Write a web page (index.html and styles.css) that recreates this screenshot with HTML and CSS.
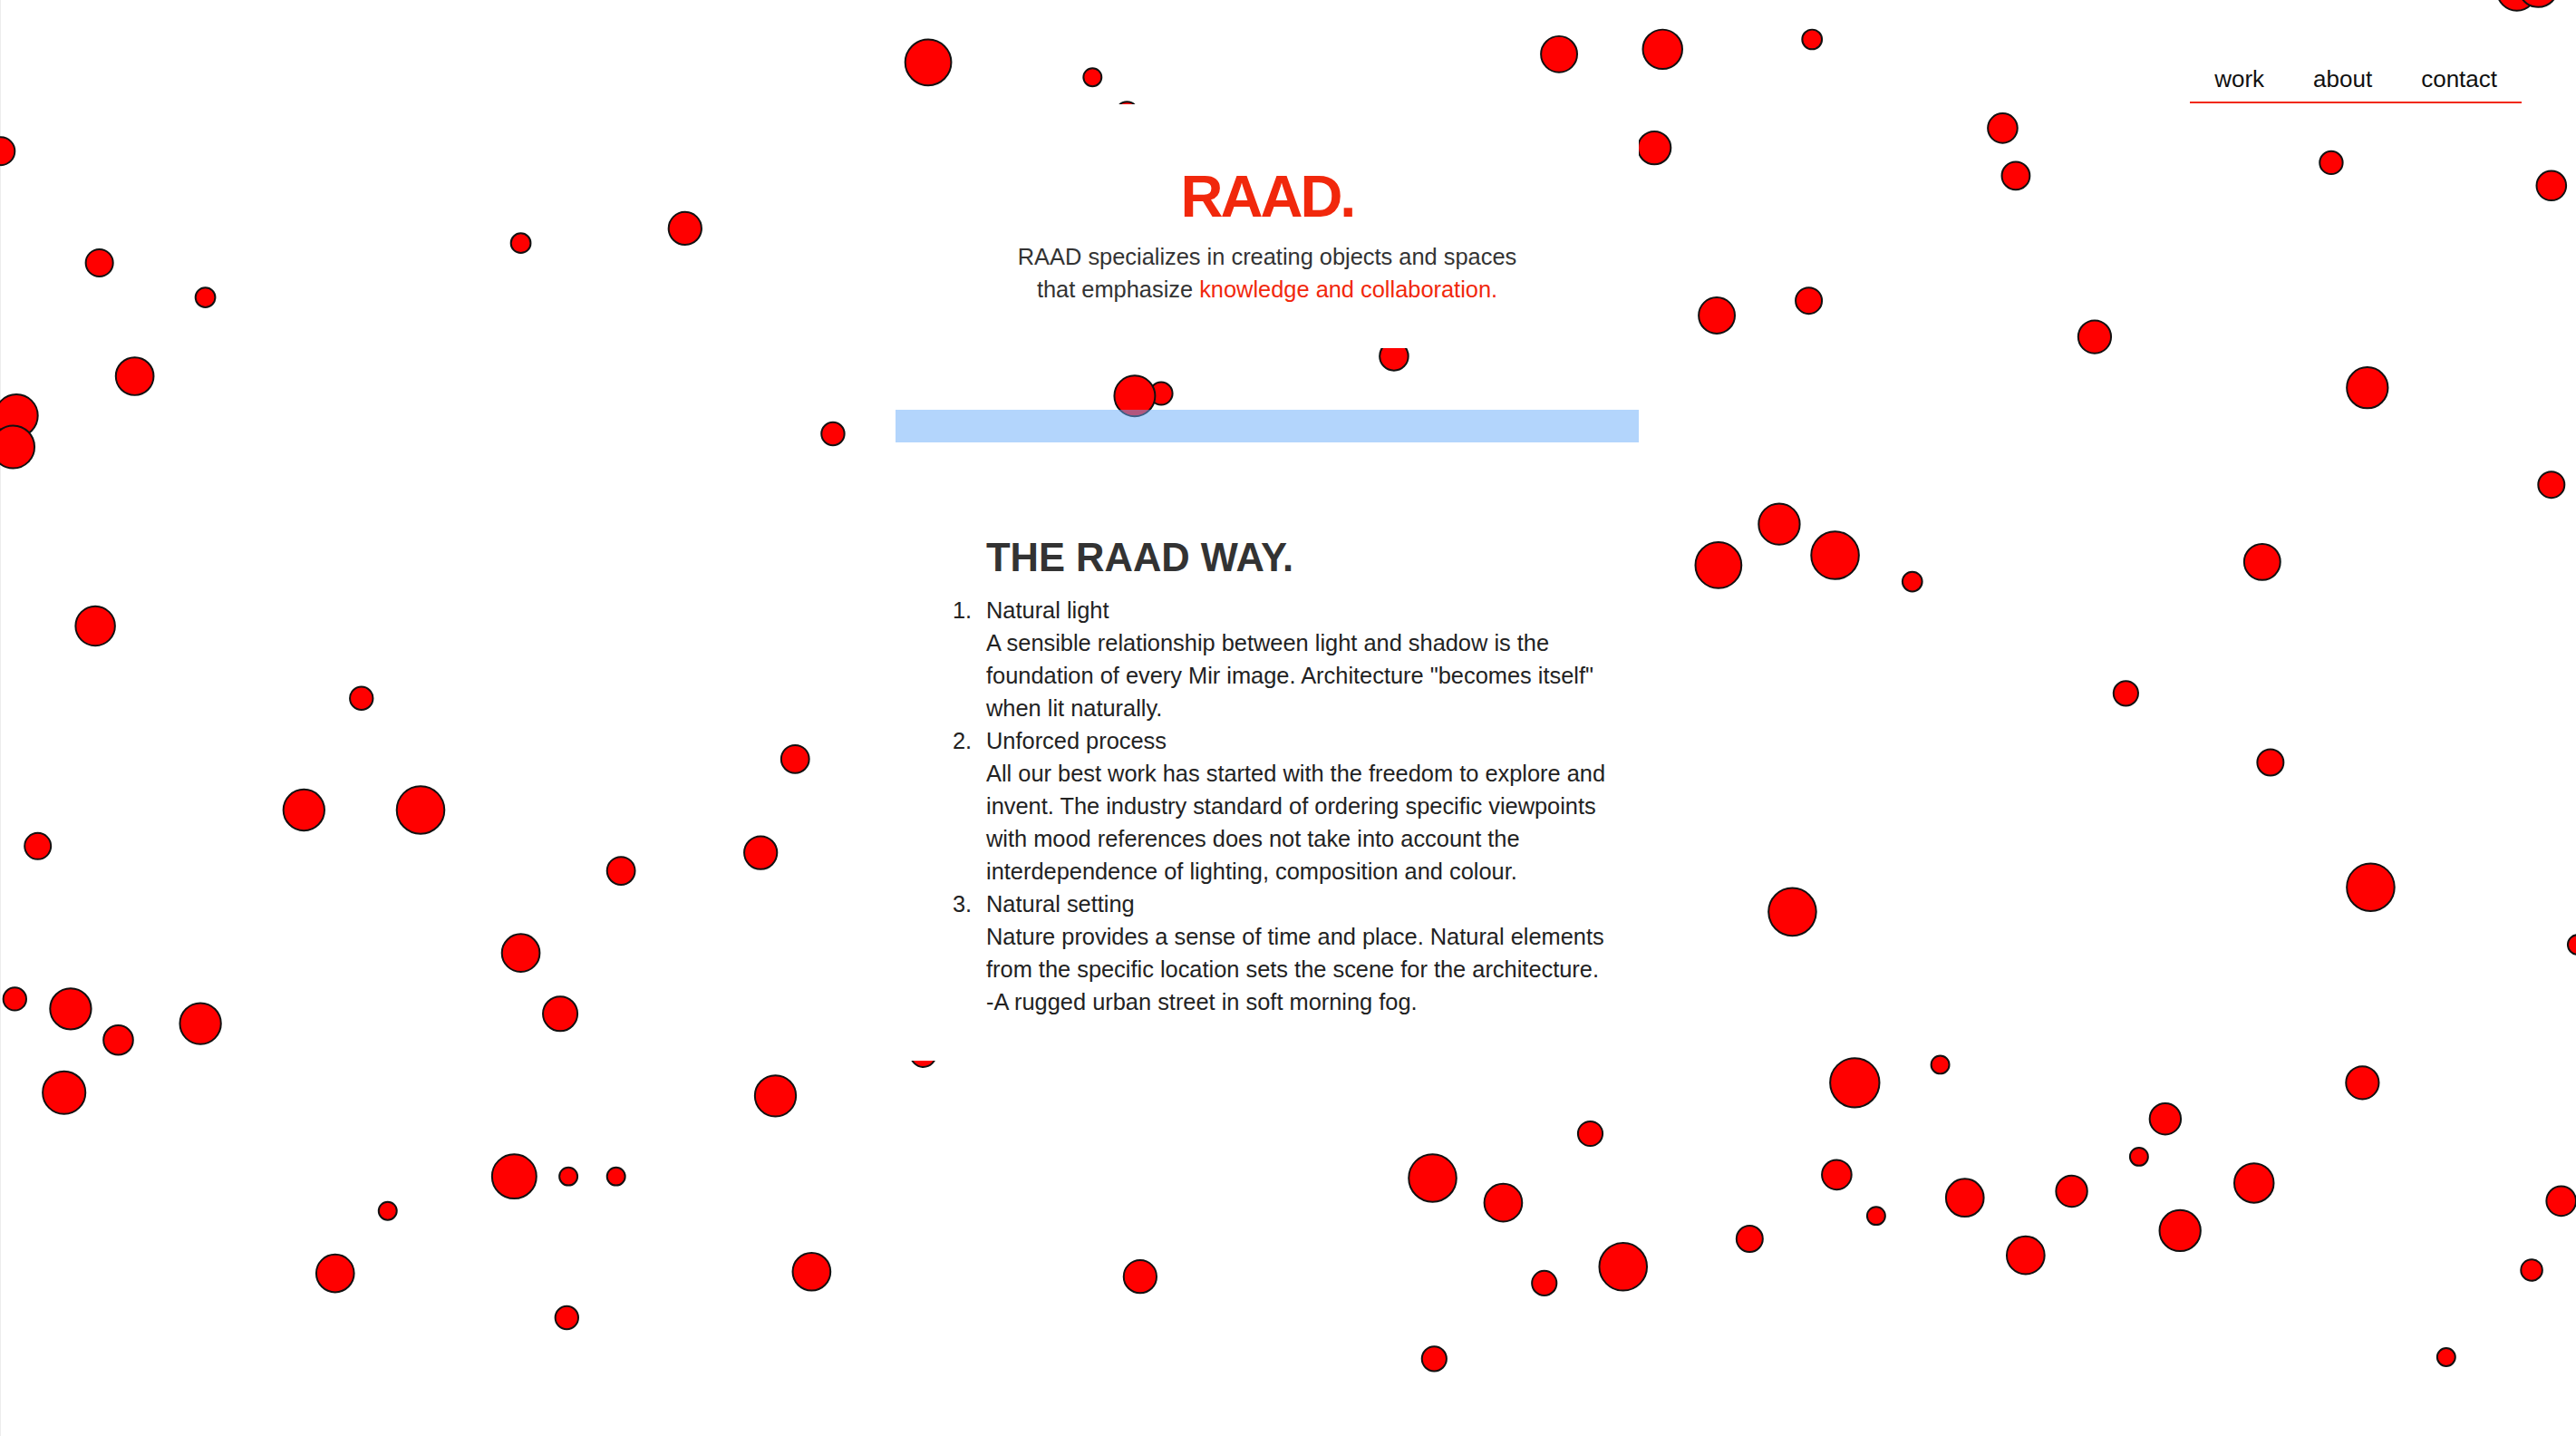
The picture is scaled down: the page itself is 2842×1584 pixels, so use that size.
FILE: index.html
```html
<!DOCTYPE html>
<html lang="en">
<head>
<meta charset="utf-8">
<title>RAAD.</title>
<link rel="stylesheet" href="styles.css">
</head>
<body>
<svg class="bubbles" viewBox="0 0 1568 874" preserveAspectRatio="none" aria-hidden="true">
  <g fill="#ff0000" stroke="#111" stroke-width="1.1">
    <circle cx="565" cy="38" r="14"/><circle cx="665" cy="47" r="5.5"/><circle cx="686" cy="69" r="7"/>
    <circle cx="949" cy="33" r="11"/><circle cx="1012" cy="30" r="12"/><circle cx="1103" cy="24" r="6"/>
    <circle cx="1532" cy="-5.5" r="12"/><circle cx="1545" cy="-7.7" r="12"/>
    <circle cx="0.5" cy="92" r="8.5"/><circle cx="1007" cy="90" r="10"/><circle cx="1219" cy="78" r="9"/>
    <circle cx="1227" cy="107" r="8.5"/><circle cx="1419" cy="99" r="7"/><circle cx="1553" cy="113" r="9"/>
    <circle cx="60.5" cy="160" r="8.3"/><circle cx="125" cy="181" r="6"/><circle cx="317" cy="148" r="6"/>
    <circle cx="417" cy="139" r="10"/><circle cx="82" cy="229" r="11.5"/><circle cx="10" cy="253" r="13"/>
    <circle cx="8" cy="272" r="13"/><circle cx="507" cy="264" r="7"/><circle cx="706.8" cy="239.5" r="6.9"/>
    <circle cx="690.7" cy="241" r="12.4"/><circle cx="848.5" cy="216.8" r="8.7"/>
    <circle cx="1045" cy="192" r="11"/><circle cx="1101" cy="183" r="8"/><circle cx="1275" cy="205" r="10"/>
    <circle cx="1441" cy="236" r="12.5"/><circle cx="1553" cy="295" r="8"/><circle cx="1083" cy="319" r="12.5"/>
    <circle cx="1046" cy="344" r="14"/><circle cx="1117" cy="338" r="14.5"/><circle cx="1164" cy="354" r="6"/>
    <circle cx="1377" cy="342" r="11"/><circle cx="58" cy="381" r="12"/><circle cx="220" cy="425" r="7"/>
    <circle cx="1294" cy="422" r="7.5"/><circle cx="484" cy="462" r="8.5"/><circle cx="1382" cy="464" r="8"/>
    <circle cx="185" cy="493" r="12.5"/><circle cx="256" cy="493" r="14.5"/><circle cx="23" cy="515" r="8"/>
    <circle cx="378" cy="530" r="8.5"/><circle cx="463" cy="519" r="10"/><circle cx="1091" cy="555" r="14.5"/>
    <circle cx="1443" cy="540" r="14.5"/><circle cx="1569" cy="575" r="6"/><circle cx="317" cy="580" r="11.5"/>
    <circle cx="9" cy="608" r="7"/><circle cx="43" cy="614" r="12.5"/><circle cx="72" cy="633" r="9"/>
    <circle cx="122" cy="623" r="12.5"/><circle cx="341" cy="617" r="10.5"/><circle cx="562" cy="641.7" r="7.7"/>
    <circle cx="39" cy="665" r="13"/><circle cx="472" cy="667" r="12.5"/><circle cx="1129" cy="659" r="15"/>
    <circle cx="1181" cy="648" r="5.5"/><circle cx="1438" cy="659" r="10"/><circle cx="968" cy="690" r="7.5"/>
    <circle cx="1318" cy="681" r="9.5"/><circle cx="1302" cy="704" r="5.5"/><circle cx="872" cy="717" r="14.5"/>
    <circle cx="915" cy="732" r="11.5"/><circle cx="1118" cy="715" r="9"/><circle cx="1142" cy="740" r="5.5"/>
    <circle cx="1196" cy="729" r="11.5"/><circle cx="1261" cy="725" r="9.5"/><circle cx="1372" cy="720" r="12"/>
    <circle cx="1559" cy="731" r="9"/><circle cx="1327" cy="749" r="12.5"/><circle cx="1233" cy="764" r="11.5"/>
    <circle cx="1065" cy="754" r="8"/><circle cx="988" cy="771" r="14.5"/><circle cx="940" cy="781" r="7.5"/>
    <circle cx="313" cy="716" r="13.5"/><circle cx="346" cy="716" r="5.5"/><circle cx="375" cy="716" r="5.5"/>
    <circle cx="236" cy="737" r="5.5"/><circle cx="204" cy="775" r="11.5"/><circle cx="494" cy="774" r="11.5"/>
    <circle cx="694" cy="777" r="10"/><circle cx="345" cy="802" r="7"/><circle cx="873" cy="827" r="7.5"/>
    <circle cx="1489" cy="826" r="5.5"/><circle cx="1541" cy="773" r="6.5"/>
  </g>
</svg>

<div class="page">
  <header class="topbar">
    <nav class="nav">
      <a class="nav-link" href="#">work</a>
      <a class="nav-link" href="#">about</a>
      <a class="nav-link" href="#">contact</a>
    </nav>
  </header>

  <main class="main">
    <div class="panel">
      <section class="intro">
        <h1 class="brand">RAAD.</h1>
        <p class="tagline">RAAD specializes in creating objects and spaces<br>that emphasize <span class="accent">knowledge and collaboration.</span></p>
      </section>

      <div class="gap"></div>
      <div class="highlight"></div>

      <section class="way">
        <h2 class="way-title">THE RAAD WAY.</h2>
        <ol class="way-list">
          <li class="way-item">
            <span class="num">1.</span>
            <div class="item-body">
              <div>Natural light</div>
              <div>A sensible relationship between light and shadow is the foundation of every Mir image. Architecture "becomes itself" when lit naturally.</div>
            </div>
          </li>
          <li class="way-item">
            <span class="num">2.</span>
            <div class="item-body">
              <div>Unforced process</div>
              <div>All our best work has started with the freedom to explore and invent. The industry standard of ordering specific viewpoints with mood references does not take into account the interdependence of lighting, composition and colour.</div>
            </div>
          </li>
          <li class="way-item">
            <span class="num">3.</span>
            <div class="item-body">
              <div>Natural setting</div>
              <div>Nature provides a sense of time and place. Natural elements from the specific location sets the scene for the architecture.</div>
              <div>-A rugged urban street in soft morning fog.</div>
            </div>
          </li>
        </ol>
      </section>
    </div>
  </main>
</div>
</body>
</html>
```

FILE: styles.css
```css
html, body {
  margin: 0;
  padding: 0;
}

body {
  width: 2842px;
  height: 1584px;
  overflow: hidden;
  background: #ffffff;
  font-family: "Liberation Sans", Arial, Helvetica, sans-serif;
  color: #333333;
  position: relative;
  box-shadow: inset 1px 0 0 #ededed;
}

.bubbles {
  position: absolute;
  left: 0;
  top: 0;
  width: 2842px;
  height: 1584px;
  z-index: 0;
}

.page {
  position: relative;
  z-index: 1;
}

/* top navigation */
.topbar {
  display: flex;
  justify-content: flex-end;
  padding: 69px 60px 0 0;
}

.nav {
  display: flex;
  border-bottom: 2px solid #f1280c;
  height: 45px;
  box-sizing: border-box;
}

.nav-link {
  padding: 0 27px;
  font-size: 26px;
  line-height: 36px;
  color: #111111;
  text-decoration: none;
}

/* central column */
.main {
  display: flex;
  justify-content: center;
  padding-right: 46px;
  margin-top: 1px;
}

.panel {
  width: 820px;
  display: flex;
  flex-direction: column;
}

.intro {
  background: #ffffff;
  height: 269px;
  box-sizing: border-box;
  padding-top: 64px;
  text-align: center;
}

.brand {
  margin: 0;
  font-size: 65px;
  line-height: 75px;
  font-weight: 700;
  letter-spacing: -3px;
  color: #f1280c;
}

.tagline {
  margin: 11px 0 0;
  font-size: 25.4px;
  line-height: 36px;
  color: #333333;
}

.accent {
  color: #f1280c;
}

.gap {
  height: 68px;
}

.highlight {
  height: 36px;
  background: rgba(104, 171, 249, 0.5);
}

.way {
  background: #ffffff;
  height: 682px;
  box-sizing: border-box;
  padding: 102px 16px 0 28px;
}

.way-title {
  margin: 0 0 15px 72px;
  font-size: 43.5px;
  line-height: 50px;
  font-weight: 700;
  letter-spacing: 0;
  color: #333333;
}

.way-list {
  list-style: none;
  margin: 0;
  padding: 0;
}

.way-item {
  display: flex;
  font-size: 25.4px;
  line-height: 36px;
  color: #222222;
}

.num {
  width: 72px;
  flex: none;
  box-sizing: border-box;
  padding-left: 35px;
}

.item-body {
  width: 704px;
}
```
